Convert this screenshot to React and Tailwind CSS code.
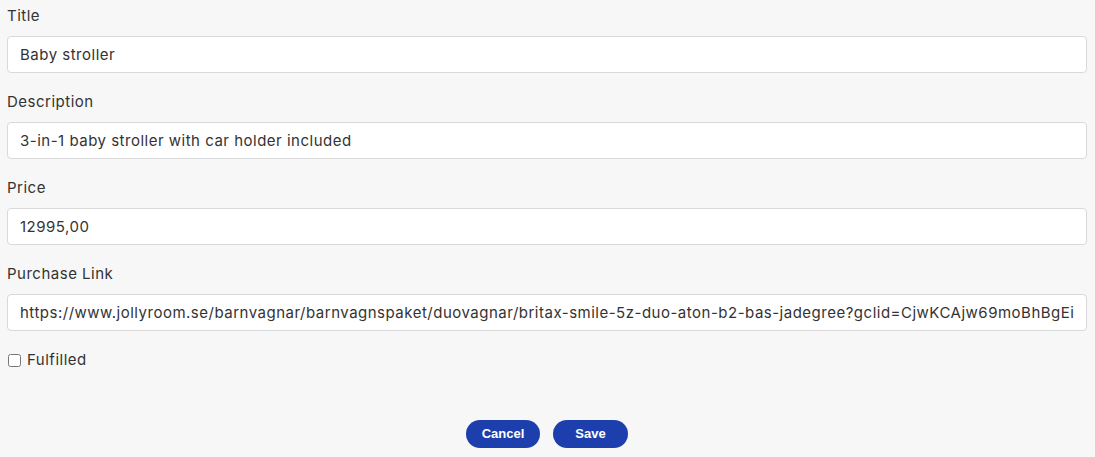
import { useState } from 'react'

const fields = [
  { label: 'Title', value: 'Baby stroller' },
  { label: 'Description', value: '3-in-1 baby stroller with car holder included' },
  { label: 'Price', value: '12995,00' },
  {
    label: 'Purchase Link',
    value:
      'https://www.jollyroom.se/barnvagnar/barnvagnspaket/duovagnar/britax-smile-5z-duo-aton-b2-bas-jadegree?gclid=CjwKCAjw69moBhBgEiwAUFCx2G-vYZ0j',
  },
]

export default function App() {
  const [values, setValues] = useState(fields.map(f => f.value))
  const [fulfilled, setFulfilled] = useState(false)

  return (
    <div className="min-h-screen w-full bg-[#f7f7f7] pl-[7px] pr-[8px] pt-[4px] font-['Inter','Noto_Sans',sans-serif] tracking-[0.5px] text-[#333]">
      {fields.map((field, i) => (
        <div key={field.label} className="mb-[17px]">
          <label className="block h-[24px] text-[15px] leading-[24px] text-[#333]">{field.label}</label>
          <input
            type="text"
            value={values[i]}
            onChange={e => setValues(values.map((v, j) => (j === i ? e.target.value : v)))}
            className="mt-[8px] block h-[37px] w-full rounded-[4px] border border-[#d9d9d9] bg-white px-[12px] text-[15px] tracking-[0.5px] text-[#333] outline-none"
          />
        </div>
      ))}

      {/* Fulfilled */}
      <label className="mt-[9px] flex items-center gap-[6px] text-[15px] leading-[24px] text-[#333]">
        <input
          type="checkbox"
          checked={fulfilled}
          onChange={e => setFulfilled(e.target.checked)}
          className="ml-[1px] h-[13px] w-[13px]"
        />
        Fulfilled
      </label>

      {/* Actions */}
      <div className="mt-[48px] flex justify-center gap-[13px]">
        <button className="h-[28px] w-[74px] rounded-full bg-[#1d3fae] font-['Liberation_Sans',Arial,sans-serif] text-[13px] font-semibold tracking-normal text-white">
          Cancel
        </button>
        <button className="h-[28px] w-[75px] rounded-full bg-[#1d3fae] font-['Liberation_Sans',Arial,sans-serif] text-[13px] font-semibold tracking-normal text-white">
          Save
        </button>
      </div>
    </div>
  )
}
